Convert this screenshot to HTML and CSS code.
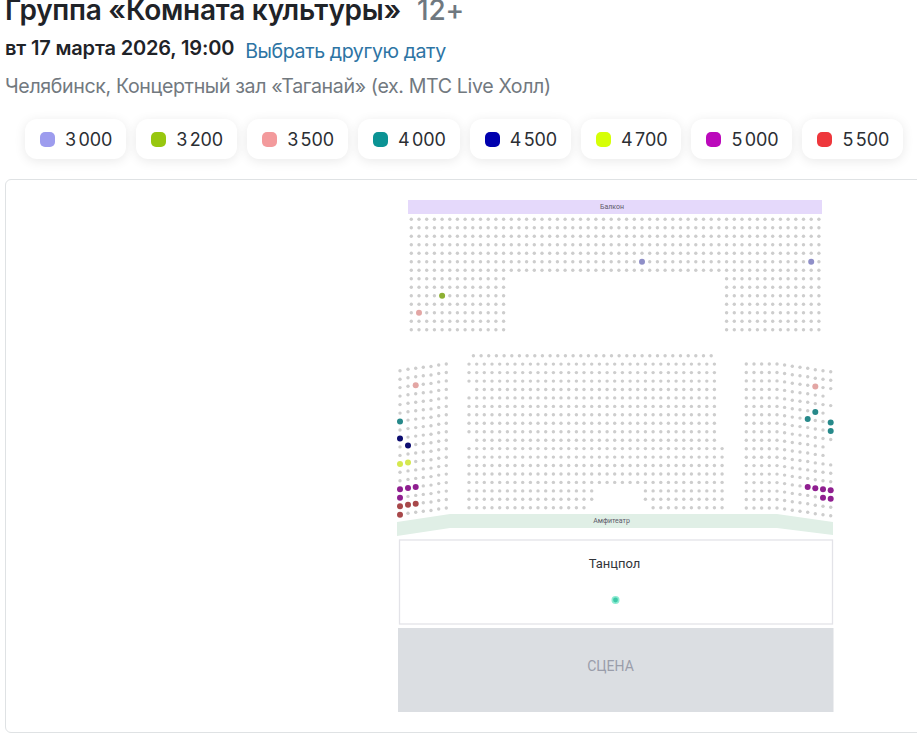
FILE: index.html
```html
<!DOCTYPE html>
<html lang="ru">
<head>
<meta charset="utf-8">
<title>Группа «Комната культуры»</title>
<link rel="stylesheet" href="styles.css">
</head>
<body>
<header class="head">
  <h1 class="title"><span>Группа «Комната культуры»</span><span class="age">12+</span></h1>
  <div class="when"><strong class="date">вт 17 марта 2026, 19:00</strong><a class="other" href="#">Выбрать другую дату</a></div>
  <div class="venue">Челябинск, Концертный зал «Таганай» (ех. МТС Live Холл)</div>
</header>
<ul class="legend">
  <li class="chip"><i class="swatch c3000"></i>3 000</li>
  <li class="chip"><i class="swatch c3200"></i>3 200</li>
  <li class="chip"><i class="swatch c3500"></i>3 500</li>
  <li class="chip"><i class="swatch c4000"></i>4 000</li>
  <li class="chip"><i class="swatch c4500"></i>4 500</li>
  <li class="chip"><i class="swatch c4700"></i>4 700</li>
  <li class="chip"><i class="swatch c5000"></i>5 000</li>
  <li class="chip"><i class="swatch c5500"></i>5 500</li>
</ul>
<section class="card">
  <svg class="map" viewBox="6 180 930 552" width="930" height="552" xmlns="http://www.w3.org/2000/svg">
    <rect class="band-balcony" x="408" y="200" width="414" height="14"/>
    <text class="band-label" x="612" y="209">Балкон</text>
    <g id="seats"></g>
    <polygon class="band-amph" points="397,522 450,514 777,514 833,522 833,535 777,528 450,528 397,536"/>
    <text class="band-label" x="611.5" y="522.5">Амфитеатр</text>
    <rect class="dance" x="399.5" y="540" width="433" height="84"/>
    <text class="dance-label" x="614.5" y="568">Танцпол</text>
    <circle class="dance-halo" cx="615.5" cy="600" r="4"/>
    <circle class="dance-seat" cx="615.5" cy="600" r="2.4"/>
    <rect class="stage" x="398" y="628" width="435.5" height="84"/>
    <text class="stage-label" x="610.5" y="671">СЦЕНА</text>
  </svg>
</section>
<script src="seats.js"></script>
</body>
</html>
```
FILE: styles.css
```css
* { box-sizing: border-box; }
html, body { margin: 0; padding: 0; background: #fff; overflow: hidden; height: 743px; }
body { font-family: Inter, "Noto Sans", sans-serif; color: #1f2328; }
.head { padding-left: 5px; }
.title { margin: 0; display: flex; gap: 16px; font-size: 28px; font-weight: 600; line-height: 20px; height: 22px; letter-spacing: -0.25px; }
.age { color: #6f7880; font-weight: 500; }
.when { display: flex; align-items: center; gap: 11px; margin-top: 14px; height: 28px; line-height: 28px; }
.date { font-size: 20px; font-weight: 600; letter-spacing: -0.16px; margin-bottom: 5px; }
.other { font-size: 19.6px; color: #2d74a4; text-decoration: none; letter-spacing: -0.42px; margin-bottom: -1px; }
.venue { margin-top: 8px; font-size: 19.6px; line-height: 28px; color: #72797f; letter-spacing: -0.37px; }
.legend { list-style: none; margin: 19px 0 0 25px; padding: 0; display: flex; gap: 10px; }
.chip { display: flex; align-items: center; gap: 10px; height: 40px; padding: 0 14px 0 15px; background: #fff; border-radius: 12px; box-shadow: 0 2px 12px rgba(0,0,0,.09); font-size: 18px; color: #2b2e33; white-space: nowrap; letter-spacing: -0.1px; word-spacing: -2.5px; }
.swatch { display: block; width: 15px; height: 15px; border-radius: 5px; }
.c3000 { background: #9d9cee; fill: #8f8fc8; }
.c3200 { background: #98c70f; fill: #8db033; }
.c3500 { background: #f39a9c; fill: #e3a6a4; }
.c4000 { background: #0b9394; fill: #27898a; }
.c4500 { background: #0000ae; fill: #0d0d70; }
.c4700 { background: #d6ff07; fill: #d5e84f; }
.c5000 { background: #bb09bb; fill: #8f1f90; }
.c5500 { background: #ee373c; fill: #a8484a; }
.card { margin: 20px 0 0 5px; width: 932px; height: 554px; border: 1px solid #dfe2e4; border-radius: 6px; overflow: hidden; }
.map { display: block; }
.band-balcony { fill: #e5d9fb; }
.band-amph { fill: #e0efe6; }
.band-label { font-family: Roboto, sans-serif; font-size: 7px; fill: #5d5a68; text-anchor: middle; }
.dance { fill: #fff; stroke: #e3e3e8; stroke-width: 1.3; }
.dance-label { font-family: Roboto, sans-serif; font-size: 13px; fill: #33353a; text-anchor: middle; }
.dance-halo { fill: #8debd2; }
.dance-seat { fill: #3fc9a8; }
.stage { fill: #dbdee2; }
.stage-label { font-family: Roboto, sans-serif; font-size: 14px; fill: #9a9daa; text-anchor: middle; }
.seat { fill: #cdcdcd; }
```
FILE: seats.js
```js
(function () {
  var NS = 'http://www.w3.org/2000/svg';
  var host = document.getElementById('seats');

  function seat(x, y, price) {
    var c = document.createElementNS(NS, 'circle');
    c.setAttribute('cx', x.toFixed(1));
    c.setAttribute('cy', y.toFixed(1));
    c.setAttribute('r', price ? 3 : 1.7);
    c.setAttribute('class', price ? 'c' + price : 'seat');
    host.appendChild(c);
  }

  function inRanges(col, ranges) {
    return ranges.some(function (r) { return col >= r[0] && col <= r[1]; });
  }

  /* balcony */
  var balconyPrices = { '9,4': 3200, '11,1': 3500, '5,30': 3000, '5,52': 3000 };
  for (var r = 0; r < 14; r++) {
    for (var c = 0; c < 54; c++) {
      if (r > 6 && c > 12 && c < 41) continue;
      seat(411.3 + c * 7.69, 219.3 + r * 8.49, balconyPrices[r + ',' + c]);
    }
  }

  /* parterre */
  var parterre = [
    [[0, 31]], [[0, 32]], [[0, 32]], [[0, 32]], [[1, 32]], [[0, 32]], [[0, 32]], [[0, 32]], [[0, 32]], [[0, 32]],
    [[1, 32]], [[0, 33]], [[0, 33]], [[0, 33]], [[0, 33]], [[0, 33]], [[0, 16], [23, 33]], [[0, 16], [23, 33]], [[0, 15], [24, 33]]
  ];
  parterre.forEach(function (ranges, row) {
    var dx = row === 0 ? 473.4 : 469;
    for (var col = 0; col < 34; col++) {
      if (inRanges(col, ranges)) seat(dx + col * 7.67, 355.7 + row * 8.45, 0);
    }
  });

  /* left wing */
  var leftX = [400, 408, 415.7, 423.3, 431, 438.7, 446.3];
  var leftY = [370.7, 369.3, 368.3, 367.3, 366.5, 365, 364];
  var leftPrices = {
    '0,6': 4000, '0,8': 4500, '1,9': 4500, '0,11': 4700, '1,11': 4700,
    '0,14': 5000, '1,14': 5000, '2,14': 5000, '0,15': 5000,
    '0,16': 5500, '1,16': 5500, '2,16': 5500, '0,17': 5500, '2,2': 3500
  };
  leftX.forEach(function (x, col) {
    for (var row = 0; row < 18; row++) {
      seat(x, leftY[col] + row * 8.47, leftPrices[col + ',' + row]);
    }
  });

  /* right wing */
  var rightY = [364, 364, 364, 364, 364, 365, 366.3, 367.3, 368.3, 369.7, 370.7, 371.7];
  var rightPrices = {
    '9,2': 3500, '9,5': 4000, '8,6': 4000, '11,6': 4000, '11,7': 4000,
    '8,14': 5000, '9,14': 5000, '10,14': 5000, '11,14': 5000, '10,15': 5000, '11,15': 5000
  };
  var rightGaps = { '11,3': 1, '11,5': 1, '11,9': 1, '11,10': 1 };
  rightY.forEach(function (y, col) {
    for (var row = 0; row < 18; row++) {
      if (rightGaps[col + ',' + row]) continue;
      seat(746.3 + col * 7.67, y + row * 8.47, rightPrices[col + ',' + row]);
    }
  });
})();
```
